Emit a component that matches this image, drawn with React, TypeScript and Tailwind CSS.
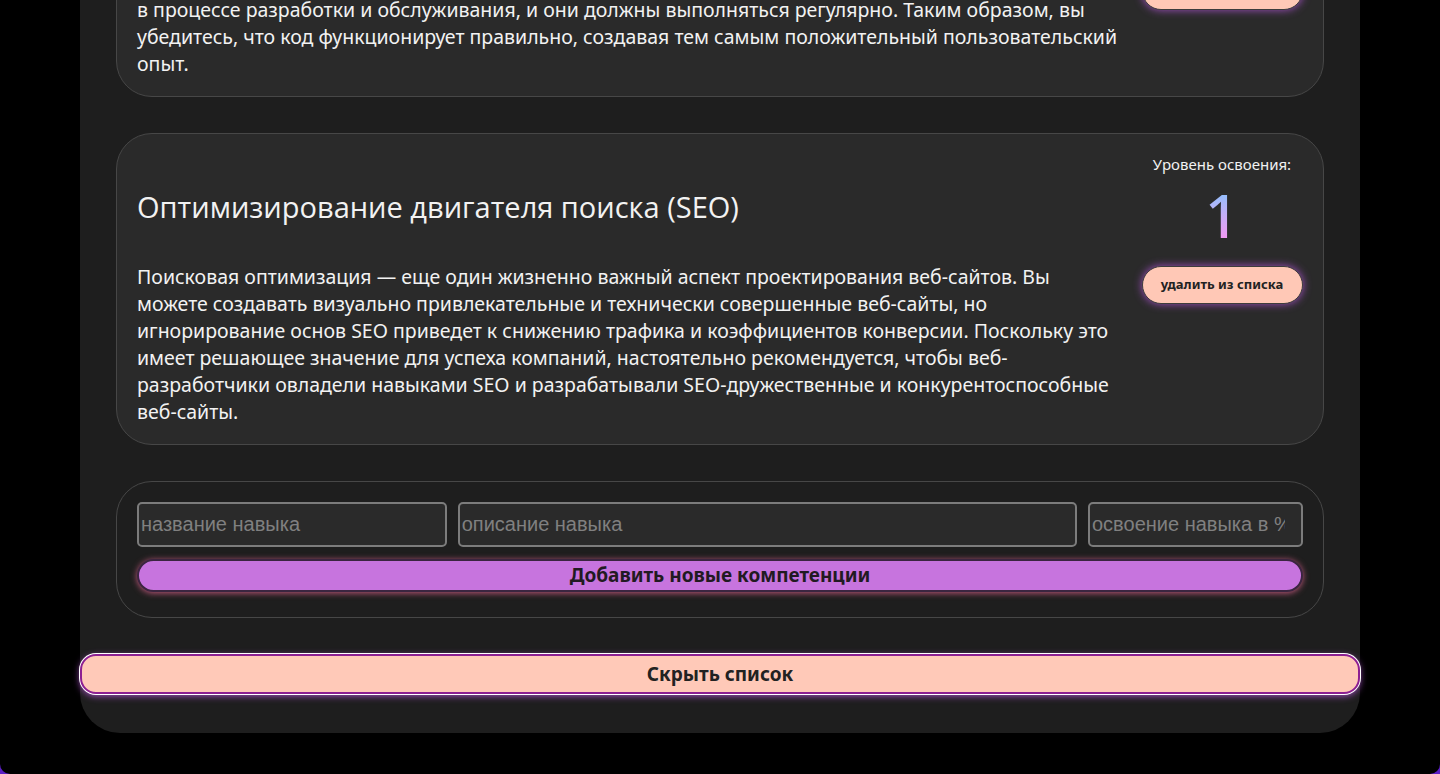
import React from 'react';

interface Skill {
  id: number;
  title: string;
  lines: string[];
  level: number;
}

const skills: Skill[] = [
  {
    id: 1,
    title: 'Тестирование и отладка',
    lines: [
      'Тестирование и отладка — одни из самых важных навыков веб-разработчика. Эти этапы нужны',
      'в процессе разработки и обслуживания, и они должны выполняться регулярно. Таким образом, вы',
      'убедитесь, что код функционирует правильно, создавая тем самым положительный пользовательский',
      'опыт.',
    ],
    level: 1,
  },
  {
    id: 2,
    title: 'Оптимизирование двигателя поиска (SEO)',
    lines: [
      'Поисковая оптимизация — еще один жизненно важный аспект проектирования веб-сайтов. Вы',
      'можете создавать визуально привлекательные и технически совершенные веб-сайты, но',
      'игнорирование основ SEO приведет к снижению трафика и коэффициентов конверсии. Поскольку это',
      'имеет решающее значение для успеха компаний, настоятельно рекомендуется, чтобы веб-',
      'разработчики овладели навыками SEO и разрабатывали SEO-дружественные и конкурентоспособные',
      'веб-сайты.',
    ],
    level: 1,
  },
];

function SkillCard({ skill }: { skill: Skill }) {
  return (
    <div className="flex gap-4 rounded-[36px] border border-[#474747] bg-[#2a2a2a] px-5 text-[#f2f2f2]">
      <div className="flex-1 pt-[55px] pb-[19px]">
        <h2 className="text-[29px] leading-9 font-normal font-['Open_Sans',sans-serif]">
          {skill.title}
        </h2>
        <p className="mt-[38px] text-[19.5px] leading-[27px] whitespace-nowrap">
          {skill.lines.map((line, i) => (
            <React.Fragment key={i}>
              {line}
              {i < skill.lines.length - 1 && <br />}
            </React.Fragment>
          ))}
        </p>
      </div>
      <div className="flex w-[162px] shrink-0 flex-col items-center pt-[20px]">
        <div className="text-[15px] leading-5">Уровень освоения:</div>
        <div className="mt-[9px] bg-gradient-to-b from-[#6ec6ff] to-[#ff8ef0] bg-clip-text text-[60px] leading-[64px] font-medium text-transparent">
          {skill.level}
        </div>
        <button className="mt-[19px] h-[38px] w-[161px] rounded-full border border-[#3d3d3d] bg-[#ffc8b6] text-[13px] font-bold text-[#222] shadow-[0_0_8px_#a04fc0]">
          удалить из списка
        </button>
      </div>
    </div>
  );
}

export default function App() {
  return (
    <div className="h-[774px] overflow-hidden bg-[#5b1fc4] font-['Noto_Sans',sans-serif]">
      <div className="h-full overflow-hidden rounded-b-[10px] bg-black">
        <div className="mx-auto -mt-[161px] flex w-[1280px] flex-col gap-9 rounded-b-[40px] bg-[#1e1e1e] pb-[39px]">
          <div className="flex flex-col gap-9 px-9">
            {skills.map((s) => (
              <SkillCard key={s.id} skill={s} />
            ))}

            {/* форма добавления */}
            <div className="rounded-[36px] border border-[#474747] bg-[#1e1e1e] px-5 pt-5 pb-[25px]">
              <div className="flex gap-[11px] font-['Liberation_Sans',Arial,sans-serif] text-[20px]">
                <input
                  className="h-[45px] w-[310px] rounded-[5px] border-2 border-[#7c7c7c] bg-[#2a2a2a] px-[2px] text-white placeholder:text-[#808080] outline-none"
                  placeholder="название навыка"
                />
                <input
                  className="h-[45px] w-[620px] rounded-[5px] border-2 border-[#7c7c7c] bg-[#2a2a2a] px-[2px] text-white placeholder:text-[#808080] outline-none"
                  placeholder="описание навыка"
                />
                <input
                  className="h-[45px] w-[215px] rounded-[5px] border-2 border-[#7c7c7c] bg-[#2a2a2a] pl-[2px] pr-[16px] text-white placeholder:text-[#808080] outline-none"
                  placeholder="освоение навыка в %"
                />
              </div>
              <button className="mt-3 h-[33px] w-full rounded-full border-2 border-[#3b2540] bg-[#c774de] text-[19px] font-bold text-[#221a22] shadow-[0_1px_6px_#c0587c]">
                Добавить новые компетенции
              </button>
            </div>
          </div>

          <button className="h-[40px] w-full rounded-2xl border-2 border-[#8d1f92] bg-[#ffc9b8] text-[19px] font-bold text-[#222] shadow-[0_0_0_1px_#ffffff,0_2px_7px_#a34fc2]">
            Скрыть список
          </button>
        </div>
      </div>
    </div>
  );
}
